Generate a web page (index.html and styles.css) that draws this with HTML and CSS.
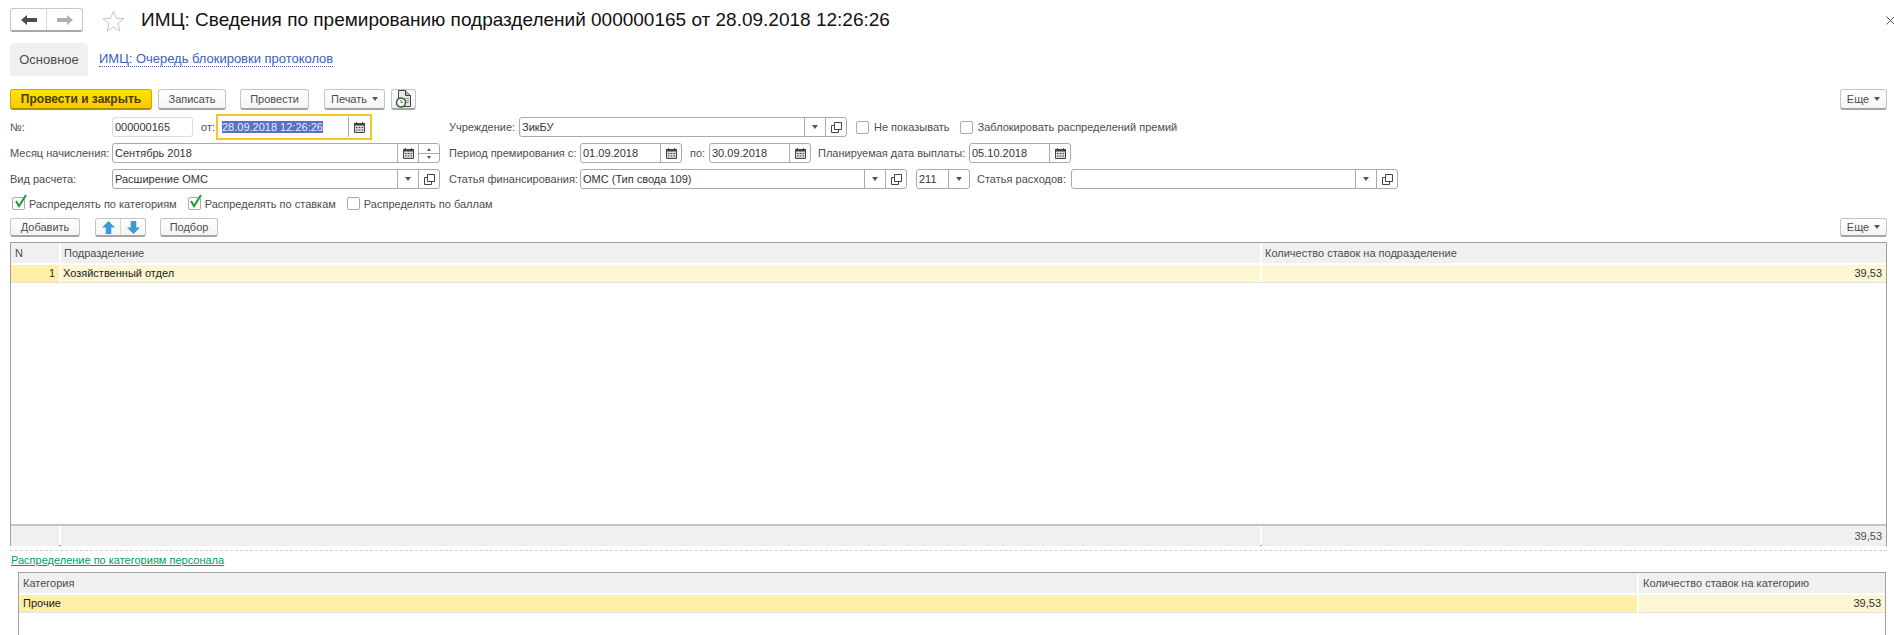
FILE: index.html
```html
<!DOCTYPE html>
<html lang="ru">
<head>
<meta charset="utf-8">
<title>ИМЦ: Сведения по премированию подразделений</title>
<link rel="stylesheet" href="styles.css">
</head>
<body>
<svg class="defs" width="0" height="0" aria-hidden="true">
  <symbol id="cal" viewBox="0 0 11 11">
    <path d="M0.500 1.500h10v9h-10z" fill="#d8d8d8" stroke="#444"/>
    <path d="M0 1h11v2.500H0z" fill="#444"/>
    <path d="M2.500 0v2M8.500 0v2" stroke="#444"/>
    <path d="M2 5h1.500v1H2zM4.700 5h1.500v1H4.700zM7.500 5H9v1H7.500zM2 7.500h1.500v1H2zM4.700 7.500h1.500v1H4.700zM7.500 7.500H9v1H7.500z" fill="#444"/>
  </symbol>
  <symbol id="open" viewBox="0 0 11 11">
    <path d="M3.500 0.500h7v7h-7z" fill="none" stroke="#444"/>
    <path d="M3.500 3.500H0.500v7h7V7.500" fill="none" stroke="#444"/>
  </symbol>
</svg>

<div class="page">
  <header class="head">
    <div class="nav">
      <span class="nav-cell">
        <svg width="16" height="10" viewBox="0 0 16 10"><path d="M0 5l6-5v3h10v4H6v3z" fill="#4d4d4d"/></svg>
      </span>
      <span class="nav-cell">
        <svg width="16" height="10" viewBox="0 0 16 10"><path d="M16 5l-6-5v3H0v4h10v3z" fill="#b0b0b0"/></svg>
      </span>
    </div>
    <svg class="star" width="23" height="22" viewBox="0 0 23 22"><path d="M11.500 1l2.800 7.300 7.700.4-6 4.900 2 7.600-6.500-4.300L5 21.200l2-7.600-6-4.900 7.700-.4z" fill="#fff" stroke="#c4c8cc"/></svg>
    <h1 class="title">ИМЦ: Сведения по премированию подразделений 000000165 от 28.09.2018 12:26:26</h1>
    <svg class="close" width="9" height="9" viewBox="0 0 9 9"><path d="M0.500 0.500l8 8M8.500 0.500l-8 8" stroke="#555" fill="none"/></svg>
  </header>

  <nav class="tabs">
    <span class="tab">Основное</span>
    <a class="tab-link">ИМЦ: Очередь блокировки протоколов</a>
  </nav>

  <div class="toolbar">
    <button class="btn btn-primary">Провести и закрыть</button>
    <button class="btn btn-save">Записать</button>
    <button class="btn btn-post">Провести</button>
    <button class="btn btn-print">Печать<i class="tri tri-gap"></i></button>
    <button class="btn btn-icon">
      <svg width="18" height="18" viewBox="0 0 18 18">
        <path d="M3.500 0.500h7l5 5v11h-12z" fill="#e4eaec" stroke="#444"/>
        <path d="M10.500 0.500v5h5" fill="#a8b6ba" stroke="#444"/>
        <path d="M9 8.500h5M9 10.500h5M9 12.500h5" stroke="#8a9aa0"/>
        <circle cx="6" cy="12.500" r="4.500" fill="#fff" stroke="#2f5b30" stroke-width="1.500"/>
        <path d="M6 10v2.500h2" stroke="#3a9a3a" fill="none"/>
      </svg>
    </button>
    <button class="btn btn-more">Еще<i class="tri tri-gap"></i></button>
  </div>

  <div class="row row-first">
    <label class="lab lab-left">№:</label>
    <div class="field field-readonly f-number"><span class="val">000000165</span></div>
    <label class="lab lab-from">от:</label>
    <div class="field-focus">
      <span class="val"><span class="selected">28.09.2018 12:26:26</span></span>
      <span class="focus-btn"><svg class="ico"><use href="#cal"/></svg></span>
    </div>
    <label class="lab lab-org">Учреждение:</label>
    <div class="field f-wide">
      <span class="val">ЗикБУ</span>
      <span class="fbtn"><i class="tri"></i></span>
      <span class="fbtn"><svg class="ico"><use href="#open"/></svg></span>
    </div>
    <span class="check check-hide"></span><span class="check-label">Не показывать</span>
    <span class="check check-lock"></span><span class="check-label">Заблокировать распределений премий</span>
  </div>

  <div class="row">
    <label class="lab lab-left">Месяц начисления:</label>
    <div class="field f-wide">
      <span class="val">Сентябрь 2018</span>
      <span class="fbtn"><svg class="ico"><use href="#cal"/></svg></span>
      <span class="fbtn spin"><i class="tri-sm tri-sm-up"></i><i class="spin-line"></i><i class="tri-sm"></i></span>
    </div>
    <label class="lab lab-mid">Период премирования с:</label>
    <div class="field f-date">
      <span class="val">01.09.2018</span>
      <span class="fbtn"><svg class="ico"><use href="#cal"/></svg></span>
    </div>
    <label class="lab lab-to">по:</label>
    <div class="field f-date">
      <span class="val">30.09.2018</span>
      <span class="fbtn"><svg class="ico"><use href="#cal"/></svg></span>
    </div>
    <label class="lab lab-pay">Планируемая дата выплаты:</label>
    <div class="field f-date">
      <span class="val">05.10.2018</span>
      <span class="fbtn"><svg class="ico"><use href="#cal"/></svg></span>
    </div>
  </div>

  <div class="row">
    <label class="lab lab-left">Вид расчета:</label>
    <div class="field f-wide">
      <span class="val">Расширение ОМС</span>
      <span class="fbtn"><i class="tri"></i></span>
      <span class="fbtn"><svg class="ico"><use href="#open"/></svg></span>
    </div>
    <label class="lab lab-mid">Статья финансирования:</label>
    <div class="field f-wide2">
      <span class="val">ОМС (Тип свода 109)</span>
      <span class="fbtn"><i class="tri"></i></span>
      <span class="fbtn"><svg class="ico"><use href="#open"/></svg></span>
    </div>
    <div class="field f-code">
      <span class="val">211</span>
      <span class="fbtn"><i class="tri"></i></span>
    </div>
    <label class="lab lab-exp">Статья расходов:</label>
    <div class="field f-wide2">
      <span class="val"></span>
      <span class="fbtn"><i class="tri"></i></span>
      <span class="fbtn"><svg class="ico"><use href="#open"/></svg></span>
    </div>
  </div>

  <div class="checks">
    <span class="check check-on"><svg width="14" height="14" viewBox="0 0 14 14"><path d="M3 6l3 5 7-11" fill="none" stroke="#1f9a3c" stroke-width="2"/></svg></span><span class="check-label">Распределять по категориям</span>
    <span class="check check-on check-b"><svg width="14" height="14" viewBox="0 0 14 14"><path d="M3 6l3 5 7-11" fill="none" stroke="#1f9a3c" stroke-width="2"/></svg></span><span class="check-label">Распределять по ставкам</span>
    <span class="check check-c"></span><span class="check-label">Распределять по баллам</span>
  </div>

  <div class="toolbar toolbar-table">
    <button class="btn btn-add">Добавить</button>
    <div class="btn btn-arrows">
      <span class="arrow-cell"><svg width="13" height="13" viewBox="0 0 14 14"><path d="M7 0l7 7H10v7H4V7H0z" fill="#3d9ad8"/></svg></span>
      <span class="arrow-cell"><svg width="13" height="13" viewBox="0 0 14 14"><path d="M7 14l7-7H10V0H4v7H0z" fill="#3d9ad8"/></svg></span>
    </div>
    <button class="btn btn-pick">Подбор</button>
    <button class="btn btn-more">Еще<i class="tri tri-gap"></i></button>
  </div>

  <section class="table table-main">
    <div class="grid grid-main thead">
      <span>N</span><span>Подразделение</span><span>Количество ставок на подразделение</span>
    </div>
    <div class="grid grid-main trow">
      <span class="cell-hl num">1</span><span class="cell-text">Хозяйственный отдел</span><span class="num">39,53</span>
    </div>
    <div class="tbody"></div>
    <div class="grid grid-main tfoot">
      <span></span><span></span><span class="num">39,53</span>
    </div>
  </section>

  <div class="split"></div>
  <a class="group-link">Распределение по категориям персонала</a>

  <section class="table table-sub">
    <div class="grid grid-sub thead">
      <span>Категория</span><span>Количество ставок на категорию</span>
    </div>
    <div class="grid grid-sub trow">
      <span class="cell-hl cell-text">Прочие</span><span class="num">39,53</span>
    </div>
  </section>
</div>
</body>
</html>
```
FILE: styles.css
```css
* { box-sizing: border-box; }
html, body { margin: 0; height: 635px; overflow: hidden; background: #fff; }
body { font: 11px/14px "Liberation Sans", Arial, sans-serif; color: #4d4d4d; }
.defs { display: block; height: 0; }
.page { display: flex; flex-direction: column; height: 635px; padding: 8px 7px 0 10px; }

.head { display: flex; align-items: center; height: 24px; flex: none; }
.nav { display: flex; width: 73px; height: 24px; border: 1px solid #c8c8c8; border-bottom: 2px solid #a8a8a8; border-radius: 3px; background: #fff; }
.nav-cell { flex: 1; display: flex; align-items: center; justify-content: center; }
.nav-cell + .nav-cell { border-left: 1px solid #d4d4d4; }
.star { margin-left: 19px; margin-top: 2px; flex: none; }
.title { margin: 0 0 0 16px; font-size: 19px; line-height: 24px; font-weight: 400; color: #111; white-space: nowrap; }
.close { margin-left: auto; margin-right: -8px; flex: none; }

.tabs { display: flex; align-items: center; height: 33px; margin-top: 11px; flex: none; }
.tab { display: flex; align-items: center; justify-content: center; width: 78px; height: 33px; background: #f0f0f0; border-radius: 4px; font-size: 13px; }
.tab-link { margin-left: 11px; font-size: 13px; letter-spacing: -0.02px; color: #3a62b8; border-bottom: 1px dotted #3a62b8; line-height: 14px; }

.toolbar { display: flex; height: 21px; margin-top: 13px; flex: none; }
.toolbar-table { height: 19px; margin-top: 8px; }
.btn { display: flex; align-items: center; justify-content: center; height: 100%; padding: 0; background: linear-gradient(#fff, #f4f4f4); border: 1px solid #c4c4c4; border-bottom: 2px solid #a4a4a4; border-radius: 3px; font: inherit; color: #4d4d4d; flex: none; }
.btn-primary { width: 142px; background: linear-gradient(#ffe500, #f6c800); border-color: #d0a800; border-bottom-color: #b09000; font-weight: 700; font-size: 12px; color: #4a3c00; }
.btn-save { width: 68px; margin-left: 6px; }
.btn-post { width: 69px; margin-left: 14px; }
.btn-print { width: 61px; margin-left: 15px; }
.btn-icon { width: 25px; margin-left: 6px; }
.btn-more { width: 47px; margin-left: auto; }
.btn-add { width: 70px; }
.btn-arrows { width: 51px; margin-left: 15px; }
.btn-pick { width: 58px; margin-left: 14px; }
.arrow-cell { flex: 1; height: 100%; display: flex; align-items: center; justify-content: center; }
.arrow-cell + .arrow-cell { border-left: 1px solid #d4d4d4; }

.tri { display: block; width: 0; height: 0; border: 3px solid transparent; border-top: 4px solid #555; border-bottom: 0; }
.tri-gap { margin-left: 5px; }
.tri-sm { display: block; width: 0; height: 0; border: 2.5px solid transparent; border-top: 3px solid #555; border-bottom: 0; }
.tri-sm-up { border-top: 0; border-bottom: 3px solid #555; }

.row { display: flex; align-items: center; height: 20px; margin-top: 6px; flex: none; }
.row-first { margin-top: 7px; }
.lab { flex: none; white-space: nowrap; }
.lab-left { width: 102px; }
.lab-from { width: 15px; margin-left: 8px; }
.lab-org { width: 70px; margin-left: 77px; }
.lab-mid { width: 131px; margin-left: 9px; }
.lab-to { width: 19px; margin-left: 8px; }
.lab-pay { width: 151px; margin-left: 7px; }
.lab-exp { width: 94px; margin-left: 7px; }

.field { display: flex; height: 20px; border: 1px solid #aaa; border-radius: 3px; background: #fff; flex: none; }
.field-readonly { border-color: #dcdcdc; }
.f-number { width: 81px; }
.f-wide { width: 328px; }
.f-wide2 { width: 327px; }
.f-date { width: 102px; }
.f-code { width: 54px; margin-left: 9px; }
.val { flex: 1; min-width: 0; padding-left: 2px; line-height: 18px; color: #333; white-space: nowrap; overflow: hidden; }
.fbtn { display: flex; flex-direction: column; align-items: center; justify-content: center; width: 21px; border-left: 1px solid #aaa; flex: none; }
.spin { gap: 2px; }
.spin-line { display: block; width: 100%; height: 1px; background: #aaa; }
.ico { display: block; width: 11px; height: 11px; }

.field-focus { display: flex; align-items: center; width: 156px; height: 26px; border: 2px solid #f5c32c; flex: none; }
.field-focus .val { padding-left: 4px; }
.selected { background: #5b70c4; color: #e8ecff; }
.focus-btn { display: flex; align-items: center; justify-content: center; width: 22px; height: 20px; border-left: 1px solid #aaa; flex: none; }

.check { display: flex; align-items: center; justify-content: center; width: 13px; height: 13px; border: 1px solid #aaa; border-radius: 2px; background: #fff; flex: none; }
.check-hide { margin-left: 9px; }
.check-lock { margin-left: 10px; }
.check-label { margin-left: 5px; white-space: nowrap; flex: none; }
.checks .check-label { margin-left: 4px; }
.check svg { flex: none; margin-top: -3px; margin-right: -2px; overflow: visible; }
.checks { display: flex; align-items: center; height: 13px; margin: 8px 0 0 2px; flex: none; }
.check-b { margin-left: 11px; }
.check-c { margin-left: 11px; }

.table { display: flex; flex-direction: column; border: 1px solid #a0a0a0; flex: none; }
.table-main { height: 304px; margin-top: 5px; }
.table-sub { height: 90px; margin: 4px 1px 0 8px; border-bottom: 0; }
.grid { display: grid; column-gap: 2px; flex: none; }
.grid-main { grid-template-columns: 48px 1fr 624px; }
.grid-sub { grid-template-columns: 1fr 246px; }
.grid > span { padding: 0 4px; white-space: nowrap; }
.grid.thead { height: 20px; line-height: 20px; background: #fff; }
.thead > span { background: #f0f0f0; }
.grid-main.thead > span:nth-child(2), .grid-main.thead > span:nth-child(3) { padding-left: 3px; }
.trow { height: 17px; margin-top: 2px; line-height: 17px; background: #fff; box-shadow: 0 1px 0 #e2e2e2; }
.trow > span { background: #fdf6d2; }
.trow > .cell-hl { background: #fdf0a6; }
.grid > .cell-text { color: #222; padding-left: 2px; }
.grid-sub > .cell-text { padding-left: 4px; }
.trow .num { color: #333; }
.num { text-align: right; }
.tbody { flex: 1; }
.tfoot { height: 21px; line-height: 20px; border-top: 2px solid #c4c4c4; background: #fff; }
.tfoot > span { background: #f0f0f0; }

.split { height: 0; margin-top: 4px; border-top: 1px dashed #d0d0d0; flex: none; }
.group-link { align-self: flex-start; margin-top: 2px; margin-left: 1px; line-height: 14px; color: #00a060; text-decoration: underline; flex: none; }
.group-link + .table-sub { margin-top: 5px; }
```
